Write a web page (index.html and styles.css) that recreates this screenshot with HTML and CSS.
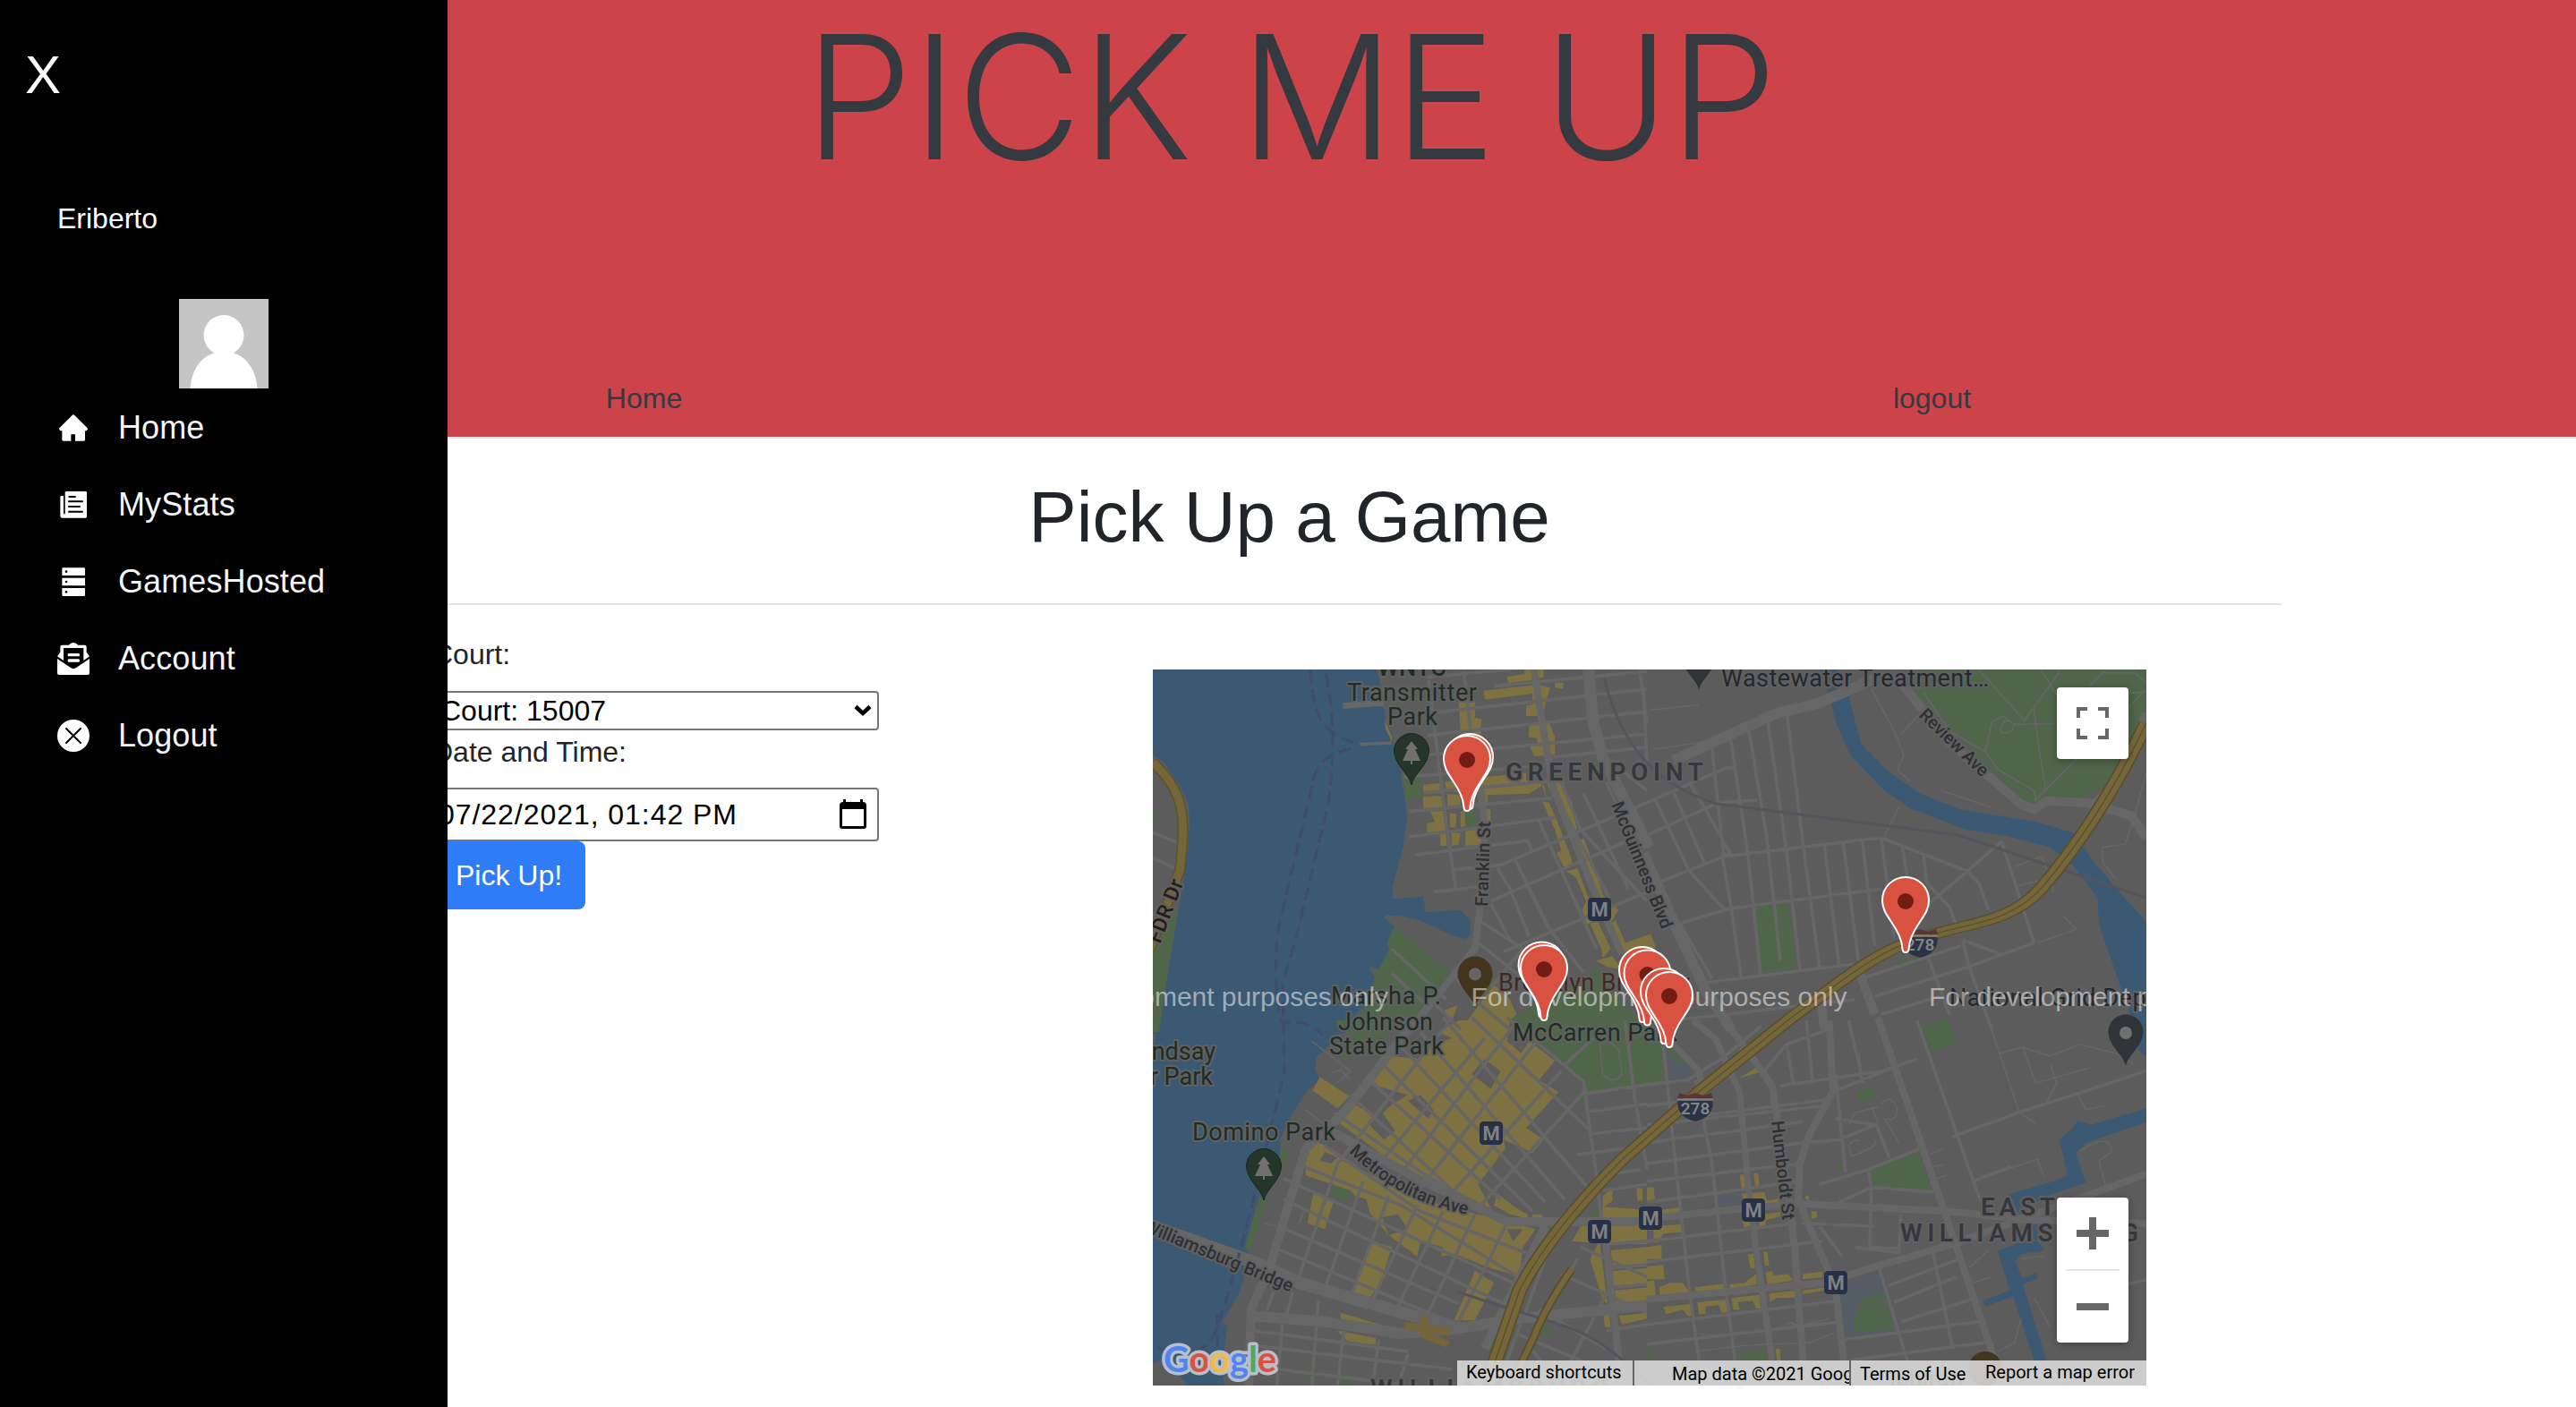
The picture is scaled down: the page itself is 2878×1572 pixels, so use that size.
FILE: index.html
```html
<!DOCTYPE html>
<html lang="en">
<head>
<meta charset="utf-8">
<title>Pick Me Up</title>
<link rel="stylesheet" href="styles.css">
</head>
<body>
<nav class="sidebar">
  <div class="close">X</div>
  <div class="user">Eriberto</div>
  <svg class="avatar" viewBox="0 0 100 100"><rect width="100" height="100" fill="#c5c5c5"/><circle cx="50" cy="40.500" r="22.500" fill="#fff"/><path d="M12.500 100C14 78 26 63 41 60H59C74 63 86 78 87.500 100Z" fill="#fff"/></svg>
  <ul class="menu">
    <li><svg viewBox="0 0 108 108"><path d="M50 12Q54 8 58 12L101 55Q104 60 98 64H93V94Q93 98 89 98H60V76H46V98H20Q16 98 16 94V64H10Q4 60 7 55Z"/></svg>Home</li>
    <li><svg viewBox="0 0 108 108"><path d="M30 9H95Q99 9 99 13V94Q99 98 95 98H16Q10 98 10 92V28Q10 24 14 24H21V85H26V13Q26 9 30 9Z"/><path class="cut" d="M40 27H60M39 43H84M39 60H75M39 77H84"/></svg>MyStats</li>
    <li><svg viewBox="0 0 108 108"><path d="M18 7H91L93 9V33H16V9ZM16 41H93V67H16ZM16 75H93V100L91 102H18L16 100Z"/><g fill="#000"><circle cx="30" cy="20" r="4"/><circle cx="30" cy="54" r="4"/><circle cx="30" cy="88" r="4"/></g></svg>GamesHosted</li>
    <li><svg viewBox="0 0 108 108"><path d="M0 54L45 84Q54 90 63 84L108 54V102Q108 108 102 108H6Q0 108 0 102Z"/><path d="M0 46L10 32V14Q10 8 16 8H38Q54 -8 70 8H92Q98 8 98 14V32L108 46L88 60V18H21V60Z"/><path d="M38 36H72Q75 36 75 41T72 46H38Q35 46 35 41T38 36ZM38 55H72Q75 55 75 60T72 65H38Q35 65 35 60T38 55Z"/></svg>Account</li>
    <li><svg viewBox="0 0 108 108"><circle cx="54" cy="54" r="54"/><path class="cut" d="M30 30L78 78M78 30L30 78"/></svg>Logout</li>
  </ul>
</nav>

<header class="top">
  <h1>PICK ME UP</h1>
  <div class="links"><a>Home</a><a>logout</a></div>
</header>

<main class="container">
  <h2>Pick Up a Game</h2>
  <hr>
  <div class="row">
    <form class="pickup">
      <label>Court:</label>
      <div class="field select"><span>Court: 15007</span><svg width="20" height="14" viewBox="0 0 20 14"><path d="M2 2.500L10 10L18 2.500" fill="none" stroke="#000" stroke-width="4.500"/></svg></div>
      <label>Date and Time:</label>
      <div class="field date"><span>07/22/2021, 01:42 PM</span><svg width="30" height="34" viewBox="0 0 30 34"><path d="M4 0H7V3H23V0H26V3Q30 3 30 7V30Q30 33 27 33H3Q0 33 0 30V7Q0 3 4 3ZM3 11V30H27V11Z" fill-rule="evenodd"/></svg></div>
      <button type="button">Pick Up!</button>
    </form>
    <div class="map">
      <svg class="canvas" width="1110" height="800" viewBox="0 0 1110 800">
        <defs>
          <path id="marker" d="M0 -1C-2.500 -1 -3.500 -3 -3.500 -5C-4 -16 -9 -25 -16 -35C-22 -44 -26 -50 -26 -59C-26 -74 -14 -85 0 -85S26 -74 26 -59C26 -50 22 -44 16 -35C9 -25 4 -16 3.500 -5C3.500 -3 2.500 -1 0 -1Z"/>
          <path id="poi" d="M0 0C-2 -12 -19 -22 -19.500 -38A19.500 19.500 0 0 1 19.500 -38C19 -22 2 -12 0 0Z"/>
          <path id="tree" d="M0 -49L7 -40H4L10 -27H1V-23H-1V-27H-10L-4 -40H-7Z"/>
          <g id="metro"><rect x="-13" y="-13" width="26" height="26" rx="4.500" fill="#263148"/><text x="0" y="7.500" text-anchor="middle" class="m">M</text></g>
          <g id="shield"><path d="M-19 -7H19.500C21 4 14 13 0 16C-14 13 -21 4 -19.500 -7Z" fill="#2a3446"/><path d="M-18 -16L-9 -13L0 -16L9 -13L18 -16L20 -10H-20Z" fill="#5a3535"/><path d="M-20 -8.500H20" stroke="#808080" stroke-width="2"/><text y="8" text-anchor="middle" class="s">278</text></g>
          <path id="metropolitan" d="M219 539C246 567 289 598 356 610"/>
          <path id="bqe" d="M1551 130C1500 280 1440 400 1390 480C1340 560 1270 556 1200 590C1130 620 1090 670 1000 760L860 915L740 1060C660 1170 610 1260 580 1340L540 1500L535 1560"/>
        </defs>
        <rect width="1110" height="800" fill="#5c5c5c"/>

        <g class="water">
          <path transform="translate(-8 -8) scale(.35714 .33333)" d="M0 24H722L735 75L732 140L748 160L750 200L775 275L795 320L800 390L812 460L818 520L805 620L785 700L773 750V793L868 785L875 838L985 830L1015 865V915L1000 928L960 915L850 862L800 850H770L755 845L745 855L778 885L755 940L762 960L735 1030L705 1020L700 1030L718 1055L715 1120L660 1175L620 1245H20L42 1230L75 1000L100 850L118 740L137 560L135 480L110 420L60 340L0 290Z"/>
          <path transform="translate(-8 392) scale(.35714 .33333)" d="M42 0H620L600 50L560 100L535 120L530 165L545 200L505 235L460 310L420 400L425 470L380 560L330 690L310 760L330 790L290 920L265 965L240 1010L255 1030L240 1150L245 1224H130L60 1130L22 1150V100Z"/>
          <path transform="translate(552 -8) scale(.3635 .33333)" d="M530 24L565 130L580 200L625 310L730 430L810 490L980 560L1110 583L1240 620L1310 680L1385 790L1390 880L1460 1100L1500 1230H1560V900L1460 780L1360 650L1320 575L1200 535L960 492L840 440L735 360L660 275L640 200L620 110L585 24Z"/>
          <path transform="translate(552 392) scale(.3635 .33333)" d="M1490 0H1560V140L1510 100ZM1540 293L1365 350L1325 335L1308 360L1268 400L1292 515L1275 530L1110 585L1145 650L1190 615L1240 585L1350 543L1317 445L1350 410L1540 340ZM1170 670L1198 680L1200 740L1222 770L1150 783L1132 810L1155 865L1200 845V865L1155 885L1228 1140H1190L1125 925L1040 960L1032 940L1115 905L1078 772L1150 745L1195 740Z"/>
        </g>

        <g class="green">
          <path transform="translate(-8 -8) scale(.35714 .33333)" d="M805 390L862 383V455L812 460ZM1000 500H1035V545L1000 552ZM778 885L955 1043L900 1110L860 1180L800 1230H620L700 1140L715 1060L762 960L755 940ZM1160 1185L1420 1025L1460 1100L1568 1230H1090ZM103 815L75 1000L42 1240H22V960ZM22 390L38 405L22 420ZM22 500L38 510L22 540Z"/>
          <path transform="translate(-8 392) scale(.35714 .33333)" d="M1120 0H1568V215L1380 235V205L1240 90ZM590 0H800L740 70L690 50L620 135L600 120L650 60ZM420 425L450 440L430 490L415 480ZM355 590L385 600L330 765L310 760ZM595 535L648 560L625 608L578 585ZM1020 540L1055 570L1040 588L1010 560ZM1360 270L1375 240V280ZM1250 695L1295 690L1225 790ZM1415 625V662H1378ZM1080 1040L1145 1030L1110 1140H1070ZM845 970L880 990L850 1020L830 1010ZM510 1168L538 1170L530 1215L503 1210ZM615 1180L650 1190L640 1224H610ZM1235 1018L1270 1035L1260 1060L1225 1040Z"/>
          <path transform="translate(552 -8) scale(.3635 .33333)" d="M815 24H1535V150L1440 350L1400 420L1320 460L1220 445L1190 475L1150 460L830 110ZM328 820L435 806L459 1025L352 1040ZM775 995L862 985L850 1000L780 1020ZM845 1225L920 1195L940 1230Z"/>
          <path transform="translate(552 392) scale(.3635 .33333)" d="M0 70L50 80V205L0 210ZM60 90L100 100L115 140L80 142ZM845 20L930 0L952 80L875 108ZM640 245L692 222L700 255L655 275ZM680 495L838 443L873 568L698 560ZM582 480L597 475L600 515L588 505ZM650 940L738 908L740 930L715 945Q755 970 750 1010L755 1035L640 1048Q620 1000 645 975L705 950L655 958ZM280 1115L365 1103V1140H282ZM0 1100L18 1095V1140H0Z"/>
        </g>
        <g fill="#565c66"><path transform="translate(552 392) scale(.3635 .33333)" d="M590 890L715 840L745 910L650 940V960L635 980V1048L755 1035L780 1040L608 1062ZM60 95L80 140L115 140L145 170L125 195L62 203ZM218 595L290 580V625L222 635Z"/></g>

        <g class="yellow">
          <path transform="translate(-8 -8) scale(.35714 .33333)" d="M1130 48L1185 40V24H1245V50L1210 60L1135 68ZM1058 95L1225 75L1265 85L1250 145L1240 180H1190V145L1210 142V105L1060 125ZM1280 68H1308L1305 88L1280 85ZM980 130L1030 128V185L1050 190L1048 240L985 245ZM1200 205L1262 200L1280 250V310L1215 315L1202 280L1225 270V255L1198 250ZM748 195L770 250V268L750 220ZM868 410L920 405V440L868 437ZM868 450L925 448L930 490L870 495ZM935 400L1190 370V395L1235 400L1255 460L1245 410L1200 440L1070 445V470L1058 475V432L1015 430L1000 445L940 425ZM942 440L985 445V485L945 490ZM890 500L930 498L938 565L880 570V540L905 535ZM950 505L972 508L970 555L952 553ZM985 500H998L1000 550L985 555ZM1065 490L1080 495L1078 540H1068ZM920 575H940L942 615H922ZM955 570L985 572L980 610L958 615ZM1000 565L1035 560L1085 575L1050 612L1000 615ZM1255 405L1310 402L1305 430L1335 470V500L1350 560L1320 570L1290 490ZM1240 465L1262 470L1290 540L1330 650L1335 680L1310 690L1285 640L1300 630L1280 560ZM1315 700L1350 690L1410 860L1380 880L1365 830L1378 800L1345 720ZM1350 600L1370 590L1410 700L1430 780L1480 830L1450 880L1420 800ZM1390 875L1415 870L1455 960L1430 990L1425 960ZM1450 880L1470 865L1500 940L1568 915V950L1490 980ZM1410 1000L1460 985L1490 1030L1440 1020ZM1090 1080L1140 1130L1160 1180L1100 1240H980ZM925 1170L975 1150L960 1200Z"/>
          <path transform="translate(-8 392) scale(.35714 .33333)" d="M980 0H1140L1130 70L1175 110L1200 70L1280 135L1230 200L1292 240L1190 360L1245 400L1210 445L1120 400L1125 430L1040 550L1080 630L1000 590L960 570L880 560L600 340L650 280L700 310L760 290L820 250L690 210L770 120L860 130L900 80L960 60L915 40ZM545 190L638 255L600 295L522 235ZM500 410L540 410L560 420L615 470L720 525L800 580L930 620L1220 700L1180 760L1170 860L1080 830L970 785L860 800L760 720L640 570L500 520ZM525 580L590 600L560 700L505 680ZM710 740L770 760L735 880L690 945L640 930ZM1030 840L1090 880L1030 1005L965 1005ZM610 980L735 1020L730 1040L610 1000ZM600 1040L720 1065V1088L630 1075ZM1100 580L1160 630L1195 650V665L1140 650L1090 620ZM1210 650H1240V662H1210ZM1430 590L1460 560V605L1435 625L1568 635V662H1430ZM1535 560L1555 565V605H1538ZM1360 690H1568V750H1440L1335 740ZM1455 770L1568 760V815L1460 822ZM1460 840L1568 830V885L1465 888ZM1468 905L1568 895V940L1472 948ZM1390 800L1420 740L1445 950L1430 940ZM1433 990L1450 985L1455 1028H1436ZM1480 990L1568 980V1000L1490 1020Z"/>
          <path transform="translate(552 392) scale(.3635 .33333)" d="M0 560L20 558L25 600L0 605ZM0 640L100 628L105 650L0 665ZM20 690L108 683V710L50 715L35 745H20ZM0 760L45 752V800H0ZM0 825L50 820L55 868H0ZM0 875L22 870L28 930L0 935ZM38 895L70 880H110L134 915L40 930ZM148 895L235 883L240 900L150 915ZM253 885L300 880L335 850L338 885L258 900ZM285 518L298 515L303 560H290ZM328 512H342L346 558H333ZM290 582L360 575L370 605L405 598V612H365L345 600L300 605ZM290 660L410 642V658L365 670V690H345V670L315 690L300 695ZM310 785L327 782L333 830H318ZM358 775H370L376 822H362ZM365 845L385 840L390 855L435 850L448 872L370 885ZM480 850L540 842V862L478 868ZM478 905L545 895V905L478 918ZM375 915L460 905L463 930L400 930L378 945ZM50 960L140 950L143 990H125L110 970L60 985ZM155 945L245 935L248 978L230 980L220 955L180 960V985H160ZM260 930L345 920L350 965H335L325 940L280 945L285 970H265ZM250 145L290 90L305 105L270 150ZM280 195L335 160L345 175ZM485 590L498 588V602L488 600ZM505 640H522V660L505 665ZM395 1102L408 1100L412 1140H400Z"/>
          <path transform="translate(552 -8) scale(.3635 .33333)" d="M0 915L12 910L28 955L0 970Z"/>
        </g>
        <g fill="#5c5c5c"><path transform="translate(-8 392) scale(.35714 .33333)" d="M700 225L770 280L725 330L655 270ZM1060 130L1110 170L1080 230L1020 180ZM860 250L900 300L885 330L820 270ZM700 350L740 310L780 370L745 400ZM560 440L600 460L580 480L545 470ZM660 590L690 600L720 720L680 800L640 700ZM790 650L820 700L760 720L740 660ZM1130 700L1180 700L1150 740ZM860 740L930 760L900 900L830 880Z"/></g>

        <!-- local streets -->
        <g class="street">
          <g transform="translate(-8 -8) scale(.35714 .33333)">
            <path d="M880 50L1568 -20M1090 80L1568 30M905 168L1568 90M880 245L1568 165M885 310L1568 240M1250 320L1568 285M805 385L1250 345M870 437L1300 395M825 500L1270 455M822 585L1285 520M845 645L1195 598L1210 635M965 695L1110 680L1568 470M970 762L1040 752M900 770L970 762M1080 800L1568 570M1120 970L1568 770M885 60L920 370L950 610L970 762M995 30L1020 260L1050 430M1545 24L1568 200M1300 400L1360 560L1568 800M1500 370L1568 430M1100 690L1140 760L1200 920M1155 660L1260 890L1370 1040M1230 530L1410 960M1300 480L1450 790M1370 440L1510 760M1440 400L1568 700M1050 870L1180 960M1080 810L1140 930M1040 940L1180 1060M1180 960L1080 1090M890 1130L985 1230M22 570L100 605M22 655L90 690M770 960L940 1130M770 1043L870 1140M955 1043L1060 1160L1140 1230M670 275L770 270"/>
          </g>
          <g transform="translate(-8 392) scale(.35714 .33333)">
            <path d="M640 250L960 570L1080 640M700 200L1110 600M735 140L1210 640M800 90L1250 610M860 40L1310 600M930 -10L1390 570M1020 -10L1390 370M1130 -10L1370 205L1385 330L1410 520L1425 660M590 310L850 500L1000 600M960 -10L600 480M1060 60L700 520M1150 20L780 540M1230 60L860 560M1300 170L940 600M1380 230L1040 630M1500 0L1530 260L1568 500M1380 245L1568 215M1390 305L1568 280M1395 380L1568 360M1350 450L1500 430M1420 520L1550 500M1430 570L1568 550M1310 150L1400 60M560 420L860 640L1190 780M470 480L800 620L1180 870M430 530L1150 880M430 600L1120 950M415 690L980 950M400 760L950 1010M600 480L480 860M680 540L560 900M760 590L640 930M850 620L700 960M930 640L780 980M1030 650L880 990M1130 680L960 1050M340 1040L820 1110M340 1090L960 1170M340 1160L800 1220M400 910L380 970M460 910L440 990M540 940L520 1224M620 1040L600 1224M730 1070L710 1224M430 990L410 1224M820 1120L790 1224M1310 670L1250 800L1130 1140M1360 760L1568 860M1300 850L1568 980M1230 970L1440 1100M1350 800L1200 1100M1450 900L1290 1224M1190 1080L1300 1224M1160 1050L1450 1180M1450 750L1568 740M1455 830L1568 820M1465 895L1568 885M1440 1040L1568 1020"/>
          </g>
          <g transform="translate(552 -8) scale(.3635 .33333)">
            <path d="M0 470L240 355L265 353M0 580L220 470L340 462M30 740L240 650L720 588L985 700L1020 740L1050 830M55 890L255 825L720 760M175 1075L640 1010M80 1200L640 1130M130 400L215 560L260 650L230 640L260 830L290 1060M200 290L235 640M258 260L310 640L350 1050M315 235L370 600L410 1000M372 200L430 640L470 1030M430 170L480 610L530 1020M545 610L590 1010M603 600L650 1000M662 595L700 950M720 588L760 920M785 620L800 720M850 650L860 740L930 820L950 880M985 700L865 810M25 460L130 700L240 830M80 430L180 680M-60 560L60 800L200 1060M1090 600L1190 940M1090 600L985 700M970 930L1090 980M865 990L930 1180M660 1060L965 950M700 1120L990 1020L1190 940M720 1180L900 1120M970 930L990 1020L1060 1230M0 340L-10 100"/>
          </g>
          <g transform="translate(552 392) scale(.3635 .33333)">
            <path d="M0 215L125 200L240 120L350 20M0 285L100 275M160 320L560 265M0 350L560 285M0 410L480 340M0 480L480 410M0 540L470 480M0 610L470 540M0 660L220 640M0 740L460 680M0 810L540 740M0 1020L590 940M0 1085L600 1010M50 80L80 400L130 900L160 1140M150 200L200 480L240 880L270 1140M430 80L450 210M490 0L510 210M360 170L430 80L560 30M410 220L720 170L830 130M570 240L800 140M580 330L700 350M490 410L590 400L705 350L745 460M530 550L680 500L840 430M590 610L690 560L880 575M690 560L685 760L775 765M780 650L775 780L640 760M580 180L610 510M650 110L660 210M620 0L665 210M740 890L960 800M760 945L950 860M780 1010L1000 935M610 1070L1020 1010M620 1140L1040 1080M715 835L800 1140M880 780L940 1100M475 680L700 690M530 690L600 790M940 390L1140 310L1535 170M830 0L1010 560L1040 640M1000 540L1120 490M1280 930L1535 870M680 500L690 560"/>
          </g>
        </g>
        <!-- lanes and park paths -->
        <g class="lane">
          <g transform="translate(552 -8) scale(.3635 .33333)"><path d="M850 100L930 230L1040 300L1080 360L1190 430L1195 465M1020 24L1160 195L1270 30M1210 24L1260 110L1535 100M1130 208L1260 206M1190 160L1200 250L1225 425M1360 80L1400 35L1500 35L1535 70M1040 300L1060 200L1095 180L1110 195Q1080 205 1090 235Q1120 245 1130 208L1110 195M1190 465L1400 240L1535 90M730 580L775 485M690 90L760 230L790 310L770 360L810 400M780 240L850 160M905 430L1055 485M10 160L160 142M20 292L190 265M1535 370L1500 510L1470 610L1400 620L1400 670L1440 725M1130 685L1215 650L1250 770M1140 750L1210 730M1200 940L1320 895L1280 850"/></g>
          <g transform="translate(552 392) scale(.3635 .33333)"><path d="M1050 0L1145 310L1195 345M1085 110L1155 90L1240 120L1330 80L1440 110L1500 150M1155 90L1195 210L1360 160M1240 150L1260 210L1225 280M1325 250L1350 300L1405 285M1000 540L1200 465L1220 525M870 450L910 430M880 490L910 485M890 530L920 520M1330 440Q1420 370 1430 440L1390 470L1410 555M620 350L640 310L710 290M720 280Q750 240 770 300Q770 340 730 330L775 410M620 420Q640 390 655 405M700 400Q720 420 630 455L620 420M690 290L710 340M1000 880L1060 860M990 830L1050 770M1150 800L1220 790M1190 930L1240 1030M160 1050L230 1060L420 1030Q440 1000 460 1025L560 1000M150 1110L300 1090L500 1080L570 1050M1150 1000L1130 1080L1080 1110"/></g>
          <g transform="translate(-8 392) scale(.35714 .33333)"><path d="M520 70L640 170L600 210M585 175L610 165L640 200M500 300L560 350M370 680L410 690M480 680L495 640M1420 80Q1450 60 1480 100L1490 180Q1460 220 1430 180Z"/></g>
        </g>
        <g class="avenue">
          <g transform="translate(-8 -8) scale(.35714 .33333)"><path stroke-width="8" d="M1048 430L1062 560L1045 830L1030 960L850 1200L820 1240M1215 24L1240 200L1275 420L1400 760L1490 980"/><path stroke-width="13" d="M1385 24L1400 200L1430 320L1575 620"/><path stroke-width="7" d="M617 146L745 135"/></g>
          <g transform="translate(-8 392) scale(.35714 .33333)"><path stroke-width="10" d="M850 -10L620 310L500 430L390 820L330 970L322 1224M560 360L850 530L1130 675L1568 675M1250 690L1060 1100"/><path stroke-width="14" d="M22 690L350 815L480 880L900 1010L970 1030"/><path stroke-width="12" d="M320 990L560 1010L800 1050L960 1035L1170 1000L1568 955"/><path stroke-width="8" d="M1430 660L1455 900L1490 1224"/></g>
          <g transform="translate(552 -8) scale(.3635 .33333)"><path stroke-width="12" d="M80 330L400 170L520 140L700 55M-10 640L90 890L180 1100L260 1230"/><path stroke-width="10" d="M760 40L930 270L1150 475L1190 492L1230 465L1350 470L1490 515L1535 590M1380 470L1450 400L1535 170M650 1030L700 1180M535 1130L545 1230"/></g>
          <g transform="translate(552 392) scale(.3635 .33333)"><path stroke-width="8" d="M240 0L340 150L385 220L400 330L440 620L455 780L480 1140M560 0L572 240L500 380L470 480L465 600L580 900L605 1140M710 -10L920 660L1070 1140M0 665L300 630L480 615L920 640L1190 670L1535 680M0 935L540 880L720 820L940 750L1535 515"/><path stroke-width="7" d="M140 0L210 60L285 240L310 540L340 800L385 1140M80 80L160 170L170 230"/></g>
        </g>
        <g class="rail"><path d="M504 10C525 90 565 130 630 150L900 185L1110 255M340 695C440 730 470 730 510 760S550 800 560 800"/></g>
        <g class="ferry"><path d="M176 0C180 60 190 70 230 84M193 5C206 60 200 120 196 150L160 300L145 350L147 450C120 560 95 670 70 740C55 770 30 770 0 755M222 88C190 95 180 110 178 130L140 290C134 340 140 390 145 395C165 390 180 400 190 408M72 720V770"/></g>

        <g fill="none" stroke-linejoin="round">
          <g transform="translate(-8 -8) scale(.72067 .52301)"><use href="#bqe" stroke="#5a4e2d" stroke-width="24"/><use href="#bqe" stroke="#75663a" stroke-width="19"/><use href="#bqe" stroke="#5a4e2d" stroke-width="2"/></g>
          <path d="M468 670Q440 710 426 745L400 800" stroke="#5a4e2d" stroke-width="10"/><path d="M468 670Q440 710 426 745L400 800" stroke="#75663a" stroke-width="6"/>
          <path d="M0 104C35 135 38 165 30 225L-3 312" stroke="#5f522e" stroke-width="12"/><path d="M0 104C35 135 38 165 30 225L-3 312" stroke="#75663a" stroke-width="9"/>
          <path d="M281 733L332 740M304 722L302 743L330 754" stroke="#75663a" stroke-width="8"/>
        </g>

        <use href="#poi" x="289" y="129" fill="#25352a" stroke="#1a261d"/><use href="#tree" x="289" y="129" fill="#707070"/>
        <use href="#poi" x="124" y="593" fill="#25352a" stroke="#1a261d"/><use href="#tree" x="124" y="593" fill="#707070"/>
        <use href="#poi" x="360" y="378" fill="#44351f"/><circle cx="360" cy="340.500" r="7" fill="#666"/>
        <use href="#poi" x="1087" y="443" fill="#303438"/><circle cx="1087" cy="406" r="7" fill="#707070"/>
        <use href="#poi" x="610" y="23" fill="#303438"/>
        <circle cx="930" cy="781" r="19" fill="#44351f"/>
        <use href="#metro" x="499" y="268"/><use href="#metro" x="378" y="518"/><use href="#metro" x="499" y="628"/><use href="#metro" x="556" y="613"/><use href="#metro" x="671" y="604"/><use href="#metro" x="763" y="685"/>
        <use href="#shield" x="606" y="489"/><use href="#shield" x="857" y="306"/>

        <g class="park">
          <text x="251" y="6.500" textLength="77" font-weight="500">WNYC</text><text x="217" y="34.500" textLength="145">Transmitter</text><text x="262" y="62" textLength="56">Park</text>
          <text x="199" y="374" textLength="123">Marsha P.</text><text x="207" y="402.500" textLength="106">Johnson</text><text x="197" y="430" textLength="128">State Park</text>
          <text x="70" y="436" text-anchor="end">Lindsay</text><text x="67" y="464" text-anchor="end">River Park</text>
          <text x="44" y="526" textLength="160">Domino Park</text><text x="402" y="414.500" textLength="184">McCarren Park</text>
          <text x="635" y="18.500" textLength="299" fill="#25292d">Wastewater Treatment…</text><text x="890" y="376" textLength="245" fill="#25292d">National Grid Depot</text>
          <text x="386" y="358.500" textLength="214" fill="#3f2b22">Brooklyn Brewery</text>
        </g>
        <g class="road-name">
          <text transform="translate(855 52) rotate(44)" textLength="99">Review Ave</text>
          <text transform="translate(512 151) rotate(68)" textLength="151">McGuinness Blvd</text>
          <text transform="translate(374 265) rotate(-88)" textLength="95">Franklin St</text>
          <text transform="translate(8 307) rotate(-69)" textLength="74" fill="#231f16" font-size="23">FDR Dr</text>
          <text><textPath href="#metropolitan" textLength="152">Metropolitan Ave</textPath></text>
          <text transform="translate(-12 627) rotate(22.500)" textLength="179">Williamsburg Bridge</text>
          <text transform="translate(691 505) rotate(83.500)" textLength="111">Humboldt St</text>
        </g>
        <g class="area">
          <text x="394" y="123.500" textLength="221">GREENPOINT</text><text x="925" y="610" textLength="83">EAST</text><text x="835" y="638.500" textLength="266">WILLIAMSBURG</text><text x="243" y="813" textLength="266">WILLIAMSBURG</text>
        </g>
        <text x="823" y="801" textLength="82" class="place">Ichiran</text>

        <g class="notice"><text x="-156" y="376" textLength="419">For development purposes only</text><text x="355.500" y="376" textLength="420">For development purposes only</text><text x="867" y="376" textLength="419">For development purposes only</text></g>

        <g class="pins">
          <use href="#marker" x="354" y="157"/><use href="#marker" x="351" y="159"/><circle cx="351" cy="101" r="9"/>
          <use href="#marker" x="434.500" y="389.500"/><use href="#marker" x="437" y="393"/><circle cx="437" cy="335" r="9"/>
          <use href="#marker" x="547" y="395"/><use href="#marker" x="552.500" y="398.500"/><circle cx="552.500" cy="341" r="9"/>
          <use href="#marker" x="571" y="419"/><use href="#marker" x="577" y="423"/><circle cx="577" cy="365" r="9"/>
          <use href="#marker" x="841" y="317"/><circle cx="841" cy="259" r="9"/>
        </g>
        <text x="12" y="785" textLength="126" lengthAdjust="spacingAndGlyphs" class="google"><tspan fill="#4e85ee">G</tspan><tspan fill="#da5142">o</tspan><tspan fill="#f1bb42">o</tspan><tspan fill="#4e85ee">g</tspan><tspan fill="#58a55c">l</tspan><tspan fill="#da5142">e</tspan></text>
      </svg>
      <div class="control full"><svg width="36" height="36" viewBox="0 0 36 36"><path d="M0 0H12V4H4V12H0ZM24 0H36V12H32V4H24ZM0 24H4V32H12V36H0ZM32 24H36V36H24V32H32Z"/></svg></div>
      <div class="control zoom"><svg width="36" height="36" viewBox="0 0 36 36"><path d="M14 0H22V14H36V22H22V36H14V22H0V14H14Z"/></svg><i></i><svg width="36" height="36" viewBox="0 0 36 36"><path d="M0 14H36V22H0Z"/></svg></div>
      <div class="legal"><span class="keys">Keyboard shortcuts</span><span class="data">Map data ©2021 Google</span><span class="terms">Terms of Use</span><span class="report">Report a map error</span></div>
    </div>
  </div>
</main>
</body>
</html>
```
FILE: styles.css
```css
* { box-sizing: border-box; }
body { margin: 0; height: 1572px; overflow: hidden; background: #fff; color: #212529; font: 32px/48px "Liberation Sans", Arial, sans-serif; }

/* Side menu, over the page */
.sidebar { position: fixed; z-index: 5; left: 0; top: 0; width: 500px; height: 100%; background: #000; color: #fff; display: flex; flex-direction: column; }
.close { padding: 49px 0 0 28px; font-size: 60px; line-height: 70px; height: 220px; }
.user { padding-left: 64px; height: 114px; line-height: 49px; }
.avatar { width: 100px; height: 100px; align-self: center; }
.menu { list-style: none; margin: 1px 0 0; padding: 0; color: #f5f5f5; font-size: 36px; letter-spacing: 0.1px; }
.menu li { display: flex; align-items: center; gap: 32px; height: 86px; padding-left: 64px; }
.menu svg { width: 36px; height: 36px; fill: #fff; overflow: visible; }
.menu .cut { stroke: #000; stroke-width: 6; stroke-linecap: round; fill: none; }

/* Page header */
.top { height: 490px; background: #cc4349; border-bottom: 2px solid #dee2e6; color: #343a40; display: flex; flex-direction: column; justify-content: space-between; }
.top h1 { margin: 0; padding-left: 6px; text-align: center; font: 300 192px/217px Inter, sans-serif; letter-spacing: -0.6px; }
.links { display: grid; grid-template-columns: 1fr 1fr; text-align: center; padding-bottom: 19px; }

.container { width: 2220px; margin: 0 auto; }
.container h2 { margin: 30px 0 0; padding-left: 3px; text-align: center; font-weight: 400; font-size: 80px; line-height: 116px; }
hr { margin: 38px 0 0; border: 0; border-top: 2px solid #e5e5e5; }
.row { display: flex; justify-content: space-between; padding: 31px 151px 0 155px; }

.pickup { width: 498px; display: flex; flex-direction: column; align-items: flex-start; }
.pickup label { height: 65px; margin-left: -1px; }
.field { width: 498px; border: 2px solid #767676; border-radius: 4px; color: #000; display: flex; align-items: center; justify-content: space-between; }
.select { height: 44px; padding: 0 6px; }
.select + label { height: 64px; }
.date { height: 60px; padding: 0 12px 0 4px; letter-spacing: 0.95px; }
.pickup button { height: 76px; padding: 0 26px; border: 0; border-radius: 8px; background: #2e7cf6; color: #fff; font: inherit; white-space: nowrap; margin-left: -1px; }

/* Map */
.map { position: relative; width: 1110px; height: 800px; margin-top: 41px; overflow: hidden; }
.canvas { display: block; }
.water { fill: #3c5974; }
.green { fill: #4f664a; }
.yellow { fill: #7e7142; }
.street path, .lane path, .avenue path { fill: none; stroke: #666; vector-effect: non-scaling-stroke; stroke-linejoin: round; }
.street path { stroke-width: 3.6px; }
.lane path { stroke-width: 1.6px; }
.rail { fill: none; stroke: #54555c; stroke-width: 3; }
.ferry { fill: none; stroke: #3f4c6c; stroke-width: 3; stroke-dasharray: 15 7; }
.canvas text { font-family: Roboto, sans-serif; }
.park, .road-name, .area { stroke: #606060; stroke-width: 4; paint-order: stroke; stroke-linejoin: round; }
.park { font-size: 27px; fill: #1f2d23; }
.road-name { font-size: 20px; font-weight: 500; fill: #2e3034; }
.area { font-size: 28px; font-weight: 600; fill: #35373d; }
.canvas .m { font-size: 22px; font-weight: 700; fill: #808080; }
.canvas .s { font-size: 19px; font-weight: 600; fill: #858585; }
.canvas .place { font-size: 26px; fill: #3f2b22; }
.canvas .notice text { font: 30px "Liberation Sans", Arial, sans-serif; fill: #fff; fill-opacity: .5; }
.pins use { fill: #d95140; stroke: #fff; stroke-width: 2; }
.pins circle { fill: #731c14; }
.canvas .google { font: 700 41px Lato, sans-serif; stroke: #b9bfc8; stroke-width: 7; stroke-linejoin: round; paint-order: stroke; }
.control { position: absolute; left: 1010px; width: 80px; background: #fff; border-radius: 4px; display: flex; flex-direction: column; align-items: center; fill: #666; box-shadow: 0 2px 8px rgba(0,0,0,.3); }
.full { top: 20px; height: 80px; justify-content: center; }
.zoom { top: 590px; height: 162px; justify-content: space-between; padding: 22px 0; }
.zoom i { width: 60px; height: 2px; background: #e6e6e6; }
.legal { position: absolute; left: 340px; right: 0; bottom: 0; height: 28px; display: flex; background: rgba(225,225,225,.84); color: #000; font: 20px/26px Roboto, sans-serif; white-space: nowrap; }
.legal span { overflow: hidden; }
.keys { width: 198px; padding-left: 10px; border-right: 2px solid #666; }
.data { width: 242px; padding-left: 42px; border-right: 2px solid #666; line-height: 30px; }
.terms { width: 140px; padding-left: 10px; line-height: 30px; }
.report { padding-left: 10px; }
```
